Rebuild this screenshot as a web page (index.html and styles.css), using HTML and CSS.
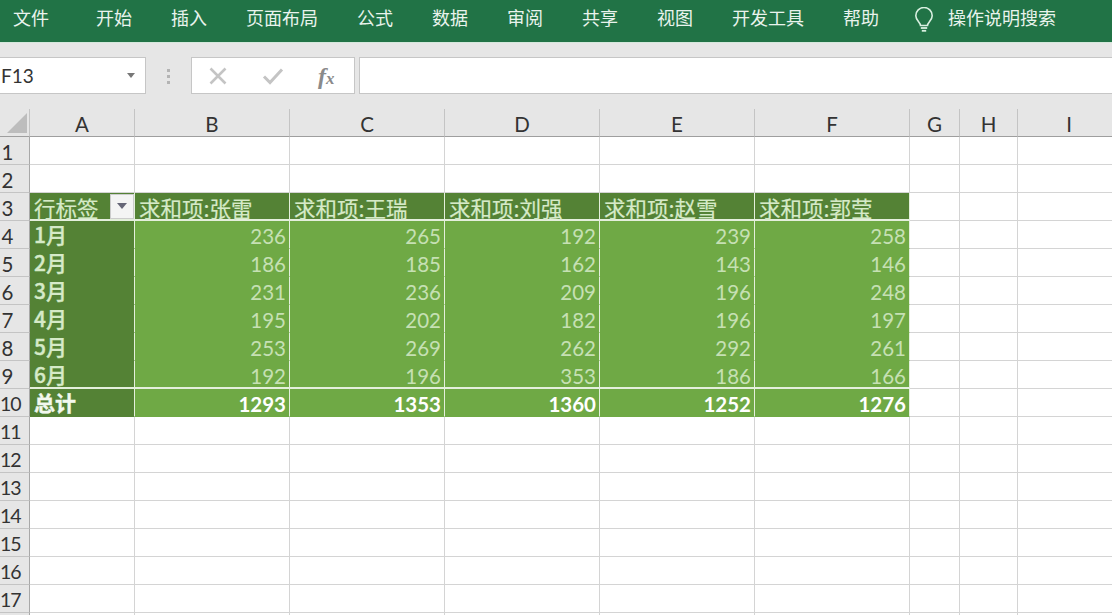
FILE: index.html
```html
<!DOCTYPE html>
<html lang="zh-CN">
<head>
<meta charset="utf-8">
<title>Excel</title>
<link rel="stylesheet" href="styles.css">
</head>
<body>
<nav class="ribbon">
  <span class="tab tab-file">文件</span>
  <span class="tab">开始</span>
  <span class="tab">插入</span>
  <span class="tab">页面布局</span>
  <span class="tab">公式</span>
  <span class="tab">数据</span>
  <span class="tab">审阅</span>
  <span class="tab">共享</span>
  <span class="tab">视图</span>
  <span class="tab">开发工具</span>
  <span class="tab">帮助</span>
  <span class="search">
    <svg class="bulb" width="20" height="26" viewBox="0 0 20 26" fill="none" stroke="#d8efe0" stroke-width="1.6"><path d="M6.500 18.500c0-3-4.700-5-4.700-9.800a8.200 8.200 0 0 1 16.400 0c0 4.800-4.700 6.800-4.700 9.800z"/><path d="M6.800 21h6.400" stroke-width="1.800"/><path d="M7.800 23.800h4.400" stroke-width="1.800"/></svg>
    <span class="search-text">操作说明搜索</span>
  </span>
</nav>
<div class="toolbar">
  <div class="namebox"><span>F13</span><i class="caret"></i></div>
  <div class="dots"><i></i><i></i><i></i></div>
  <div class="fx-buttons">
    <svg width="18" height="18" viewBox="0 0 18 18" stroke="#c4c4c4" stroke-width="2.600" fill="none"><path d="M1.500 1.500l15 15M16.500 1.500l-15 15"/></svg>
    <svg width="22" height="18" viewBox="0 0 22 18" stroke="#c4c4c4" stroke-width="3" fill="none"><path d="M2 9.500l6 6L20 2.500"/></svg>
    <span class="fx">f<small>x</small></span>
  </div>
  <div class="formula"></div>
</div>
<div class="sheet">
  <div class="h corner"><svg width="22" height="22" viewBox="0 0 22 22"><path d="M21 1v20H1z" fill="#bdbdbd"/></svg></div>
  <div class="h">A</div><div class="h">B</div><div class="h">C</div><div class="h">D</div><div class="h">E</div><div class="h">F</div><div class="h">G</div><div class="h">H</div><div class="h last">I</div>

  <div class="r">1</div><div class="c"></div><div class="c"></div><div class="c"></div><div class="c"></div><div class="c"></div><div class="c"></div><div class="c"></div><div class="c"></div><div class="c"></div>
  <div class="r">2</div><div class="c"></div><div class="c"></div><div class="c"></div><div class="c"></div><div class="c"></div><div class="c"></div><div class="c"></div><div class="c"></div><div class="c"></div>

  <div class="r">3</div>
  <div class="c head label">行标签<span class="filter"><i></i></span></div>
  <div class="c head">求和项:张雷</div><div class="c head">求和项:王瑞</div><div class="c head">求和项:刘强</div><div class="c head">求和项:赵雪</div><div class="c head">求和项:郭莹</div>
  <div class="c"></div><div class="c"></div><div class="c"></div>

  <div class="r">4</div><div class="c rowlabel">1月</div><div class="c num">236</div><div class="c num">265</div><div class="c num">192</div><div class="c num">239</div><div class="c num">258</div><div class="c"></div><div class="c"></div><div class="c"></div>
  <div class="r">5</div><div class="c rowlabel">2月</div><div class="c num">186</div><div class="c num">185</div><div class="c num">162</div><div class="c num">143</div><div class="c num">146</div><div class="c"></div><div class="c"></div><div class="c"></div>
  <div class="r">6</div><div class="c rowlabel">3月</div><div class="c num">231</div><div class="c num">236</div><div class="c num">209</div><div class="c num">196</div><div class="c num">248</div><div class="c"></div><div class="c"></div><div class="c"></div>
  <div class="r">7</div><div class="c rowlabel">4月</div><div class="c num">195</div><div class="c num">202</div><div class="c num">182</div><div class="c num">196</div><div class="c num">197</div><div class="c"></div><div class="c"></div><div class="c"></div>
  <div class="r">8</div><div class="c rowlabel">5月</div><div class="c num">253</div><div class="c num">269</div><div class="c num">262</div><div class="c num">292</div><div class="c num">261</div><div class="c"></div><div class="c"></div><div class="c"></div>
  <div class="r">9</div><div class="c rowlabel endrow">6月</div><div class="c num endrow">192</div><div class="c num endrow">196</div><div class="c num endrow">353</div><div class="c num endrow">186</div><div class="c num endrow">166</div><div class="c"></div><div class="c"></div><div class="c"></div>
  <div class="r wide">10</div><div class="c rowlabel total">总计</div><div class="c num total">1293</div><div class="c num total">1353</div><div class="c num total">1360</div><div class="c num total">1252</div><div class="c num total">1276</div><div class="c"></div><div class="c"></div><div class="c"></div>

  <div class="r wide">11</div><div class="c"></div><div class="c"></div><div class="c"></div><div class="c"></div><div class="c"></div><div class="c"></div><div class="c"></div><div class="c"></div><div class="c"></div>
  <div class="r wide">12</div><div class="c"></div><div class="c"></div><div class="c"></div><div class="c"></div><div class="c"></div><div class="c"></div><div class="c"></div><div class="c"></div><div class="c"></div>
  <div class="r wide">13</div><div class="c"></div><div class="c"></div><div class="c"></div><div class="c"></div><div class="c"></div><div class="c"></div><div class="c"></div><div class="c"></div><div class="c"></div>
  <div class="r wide">14</div><div class="c"></div><div class="c"></div><div class="c"></div><div class="c"></div><div class="c"></div><div class="c"></div><div class="c"></div><div class="c"></div><div class="c"></div>
  <div class="r wide">15</div><div class="c"></div><div class="c"></div><div class="c"></div><div class="c"></div><div class="c"></div><div class="c"></div><div class="c"></div><div class="c"></div><div class="c"></div>
  <div class="r wide">16</div><div class="c"></div><div class="c"></div><div class="c"></div><div class="c"></div><div class="c"></div><div class="c"></div><div class="c"></div><div class="c"></div><div class="c"></div>
  <div class="r wide">17</div><div class="c"></div><div class="c"></div><div class="c"></div><div class="c"></div><div class="c"></div><div class="c"></div><div class="c"></div><div class="c"></div><div class="c"></div>
  <div class="r"></div><div class="c"></div><div class="c"></div><div class="c"></div><div class="c"></div><div class="c"></div><div class="c"></div><div class="c"></div><div class="c"></div><div class="c"></div>
</div>
</body>
</html>
```
FILE: styles.css
```css
* { box-sizing: border-box; }
html, body { margin: 0; height: 615px; overflow: hidden; background: #fff; }
body { font-family: Lato, "Noto Sans CJK SC", sans-serif; color: #222; }

.ribbon {
  height: 43px;
  background: #217346;
  border-bottom: 1px solid #d5e8dc;
  display: flex;
  align-items: center;
  padding: 0 0 8px 13px;
  gap: 39px;
  color: #e9f3ed;
  font: 18px/24px "Noto Sans CJK SC", sans-serif;
}
.tab-file { margin-right: 8px; }
.search { display: flex; align-items: center; margin-left: -4px; gap: 14px; }
.bulb { flex: none; margin-top: 5px; }

.toolbar {
  height: 66px;
  background: #e6e6e6;
  display: flex;
  align-items: flex-start;
  padding-top: 14px;
}
.namebox {
  width: 146px;
  height: 37px;
  background: #fff;
  border: 1px solid #c6c6c6;
  border-left: 0;
  display: flex;
  align-items: center;
  justify-content: space-between;
  padding: 0 10px 0 1px;
  font-size: 19px;
  color: #333;
}
.caret { border: 4px solid transparent; border-top: 5px solid #777; border-bottom: 0; }
.dots { width: 45px; display: flex; flex-direction: column; align-items: center; gap: 3px; padding-top: 12px; }
.dots i { width: 3px; height: 3px; background: #b4b4b4; }
.fx-buttons {
  width: 164px;
  height: 37px;
  background: #fff;
  border: 1px solid #c6c6c6;
  display: flex;
  align-items: center;
  padding-left: 17px;
  gap: 35px;
}
.fx {
  font: italic bold 24px/1 "Liberation Serif", serif;
  color: #8a8a8a;
  margin-left: -1px;
}
.fx small { font-size: 17px; }
.formula {
  flex: 1;
  height: 37px;
  margin-left: 4px;
  background: #fff;
  border: 1px solid #c6c6c6;
  border-right: 0;
}

.sheet {
  display: grid;
  grid-template-columns: 30px 105px repeat(5, 155px) 50px 58px 102px;
  grid-auto-rows: 28px;
  font-size: 20.5px;
}
.h {
  background: #e6e6e6;
  border-right: 1px solid #c4c4c4;
  border-bottom: 1px solid #9e9e9e;
  display: flex;
  align-items: center;
  justify-content: center;
  padding-top: 3px;
  color: #333;
}
.h.last { border-right: 0; }
.corner { align-items: flex-end; justify-content: flex-end; padding: 0 1px 2px 0; }
.r {
  background: #e6e6e6;
  border-right: 1px solid #a8a8a8;
  border-bottom: 1px solid #c4c4c4;
  display: flex;
  align-items: center;
  justify-content: center;
  line-height: 1;
  padding: 3px 14px 0 0;
  white-space: nowrap;
  color: #333;
}
.r.wide {
  justify-content: flex-start;
  padding: 3px 0 0;
  font-size: 19.5px;
  letter-spacing: -1px;
}
.c {
  background: #fff;
  border-right: 1px solid #d4d4d4;
  border-bottom: 1px solid #d4d4d4;
  white-space: nowrap;
  display: flex;
  align-items: center;
}
.head {
  background: #548235;
  color: #d6eac8;
  font: 21.5px/1 "Noto Sans CJK SC", sans-serif;
  -webkit-text-stroke: 0.2px #d6eac8;
  padding: 3px 0 0 4px;
  border-right-color: #e4efdc;
  border-bottom: 2px solid #e4efdc;
}
.label { justify-content: space-between; padding-right: 0; }
.filter {
  width: 24px;
  height: 25px;
  background: #f4f4f4;
  border: 1px solid #ccc;
  display: flex;
  align-items: center;
  justify-content: center;
  margin-top: -3px;
}
.filter i { border: 5px solid transparent; border-top: 6px solid #667; border-bottom: 0; }
.rowlabel {
  background: #548235;
  color: #d6eac8;
  font: 500 21px/1 "Noto Sans CJK SC", sans-serif;
  -webkit-text-stroke: 0.4px #d6eac8;
  padding: 0 0 0 4px;
  border-right-color: #e4efdc;
  border-bottom-color: #548235;
}
.num {
  background: #6fa945;
  color: #c6e0b4;
  font-family: Lato, sans-serif;
  font-size: 20.5px;
  justify-content: flex-end;
  padding: 3px 3px 0 0;
  border-right-color: #e4efdc;
  border-bottom-color: #6fa945;
}
.endrow { border-bottom: 2px solid #e4efdc; }
.total { color: #fff; font-weight: bold; }
.rowlabel.total { color: #f2f8ee; -webkit-text-stroke-color: #f2f8ee; }
```
